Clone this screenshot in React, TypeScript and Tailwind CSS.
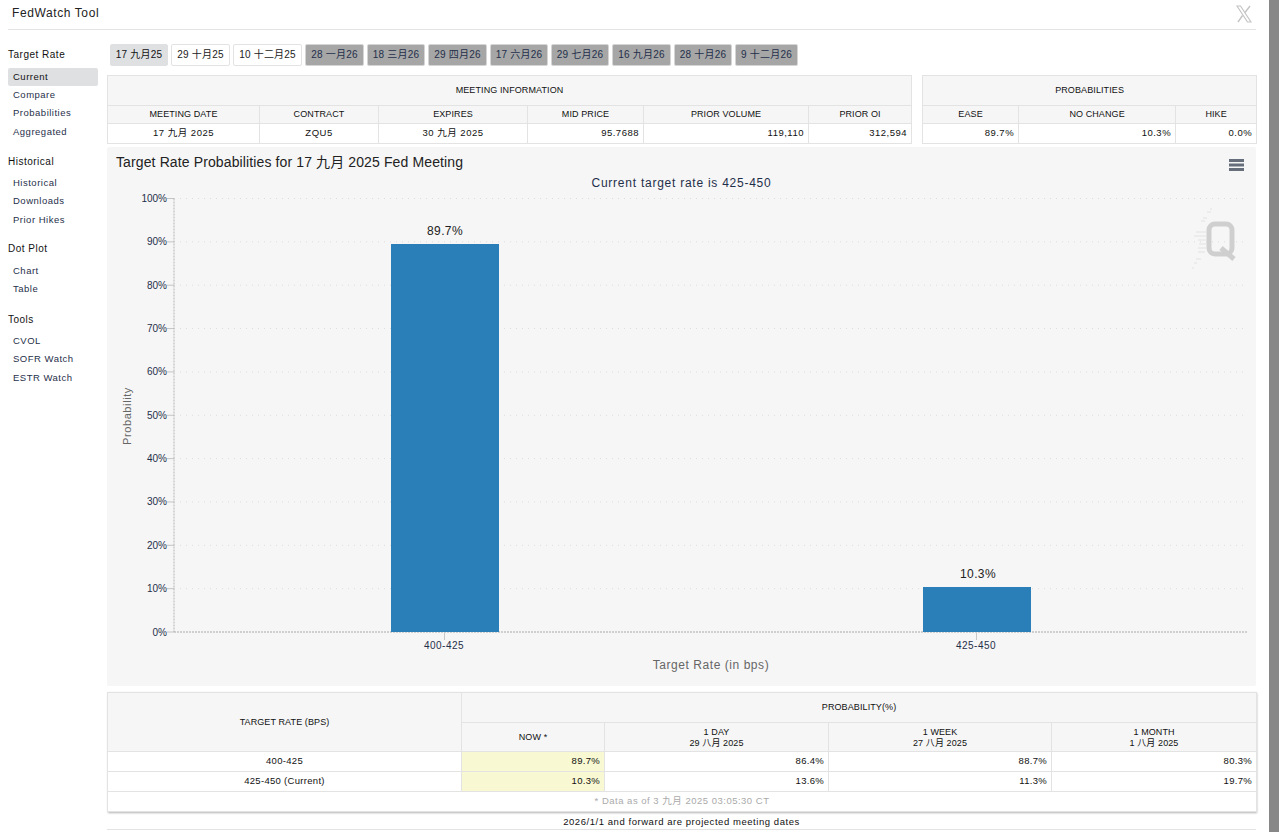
import React from 'react';

const font = 'font-["Liberation_Sans","Noto_Sans_CJK_SC",sans-serif]';

const tabs = [
  { label: '17 九月25', w: 'w-[58px]', kind: 'active' },
  { label: '29 十月25', w: 'w-[59px]', kind: 'open' },
  { label: '10 十二月25', w: 'w-[69px]', kind: 'open' },
  { label: '28 一月26', w: 'w-[59px]', kind: 'future' },
  { label: '18 三月26', w: 'w-[58px]', kind: 'future' },
  { label: '29 四月26', w: 'w-[59px]', kind: 'future' },
  { label: '17 六月26', w: 'w-[58px]', kind: 'future' },
  { label: '29 七月26', w: 'w-[58px]', kind: 'future' },
  { label: '16 九月26', w: 'w-[59px]', kind: 'future' },
  { label: '28 十月26', w: 'w-[58px]', kind: 'future' },
  { label: '9 十二月26', w: 'w-[63px]', kind: 'future' },
];

const nav = [
  { title: 'Target Rate', items: ['Current', 'Compare', 'Probabilities', 'Aggregated'], gap: 'mb-[13.5px]' },
  { title: 'Historical', items: ['Historical', 'Downloads', 'Prior Hikes'], gap: 'mb-[13px]' },
  { title: 'Dot Plot', items: ['Chart', 'Table'], gap: 'mb-[14px]' },
  { title: 'Tools', items: ['CVOL', 'SOFR Watch', 'ESTR Watch'], gap: '' },
];

const th = 'border border-[#e3e3e3] bg-[#f6f6f6] font-normal text-center text-[#111] p-0 pt-[1px] text-[9px] tracking-[0.1px]';
const td = 'border border-[#e3e3e3] bg-white text-[#111] p-0 px-[4px]';

function Sidebar() {
  return (
    <aside className="w-[90px] shrink-0 pt-[18px] text-[9.5px] tracking-[0.5px]">
      {nav.map((group) => (
        <div key={group.title} className={group.gap}>
          <div className="h-[14px] leading-[14px] text-[#111] text-[10px]">{group.title}</div>
          <div className="mt-[5.5px]">
            {group.items.map((item) => (
              <div
                key={item}
                className={`h-[18.4px] leading-[18px] pl-[5px] text-[#1f2f4a] rounded-[2px] ${item === 'Current' ? 'bg-[#dfe0e2] text-[#111]' : ''}`}
              >
                {item}
              </div>
            ))}
          </div>
        </div>
      ))}
    </aside>
  );
}

function Tabs() {
  return (
    <div className="flex gap-[3px] pl-[3px] h-[23px]">
      {tabs.map((tab) => (
        <div
          key={tab.label}
          className={`${tab.w} h-[22px] leading-[20px] text-center text-[10px] tracking-[0.2px] rounded-[2px] border whitespace-nowrap ${
            tab.kind === 'active'
              ? 'bg-[#dfe0e2] border-[#dfe0e2] text-[#111]'
              : tab.kind === 'open'
                ? 'bg-white border-[#e3e3e3] text-[#222]'
                : 'bg-[#a6a6a6] border-[#d5d5d5] text-[#1f2f4a]'
          }`}
        >
          {tab.label}
        </div>
      ))}
    </div>
  );
}

function MeetingTables() {
  return (
    <div className="flex gap-[10px] mt-[8px] text-[9.5px] tracking-[0.5px]">
      <table className="table-fixed border-collapse w-[804px] h-[68px]">
        <colgroup>
          <col className="w-[152px]" />
          <col className="w-[119px]" />
          <col className="w-[149px]" />
          <col className="w-[116px]" />
          <col className="w-[165px]" />
          <col className="w-[103px]" />
        </colgroup>
        <thead>
          <tr className="h-[30px]">
            <th colSpan={6} className={th}>MEETING INFORMATION</th>
          </tr>
          <tr className="h-[18px]">
            {['MEETING DATE', 'CONTRACT', 'EXPIRES', 'MID PRICE', 'PRIOR VOLUME', 'PRIOR OI'].map((h) => (
              <th key={h} className={th}>{h}</th>
            ))}
          </tr>
        </thead>
        <tbody>
          <tr className="h-[20px]">
            <td className={`${td} text-center`}>17 九月 2025</td>
            <td className={`${td} text-center`}>ZQU5</td>
            <td className={`${td} text-center`}>30 九月 2025</td>
            <td className={`${td} text-right`}>95.7688</td>
            <td className={`${td} text-right`}>119,110</td>
            <td className={`${td} text-right`}>312,594</td>
          </tr>
        </tbody>
      </table>
      <table className="table-fixed border-collapse w-[334px] h-[68px]">
        <colgroup>
          <col className="w-[96px]" />
          <col className="w-[157px]" />
          <col className="w-[81px]" />
        </colgroup>
        <thead>
          <tr className="h-[30px]">
            <th colSpan={3} className={th}>PROBABILITIES</th>
          </tr>
          <tr className="h-[18px]">
            {['EASE', 'NO CHANGE', 'HIKE'].map((h) => (
              <th key={h} className={th}>{h}</th>
            ))}
          </tr>
        </thead>
        <tbody>
          <tr className="h-[20px]">
            <td className={`${td} text-right`}>89.7%</td>
            <td className={`${td} text-right`}>10.3%</td>
            <td className={`${td} text-right`}>0.0%</td>
          </tr>
        </tbody>
      </table>
    </div>
  );
}

// chart coordinates are relative to the panel's svg (panel origin 107,147)
function Chart() {
  const top = 51.5;
  const bottom = 485;
  const axisX = 67;
  const right = 1141;
  const ticks = [100, 90, 80, 70, 60, 50, 40, 30, 20, 10, 0];
  const yOf = (v: number) => bottom - ((bottom - top) * v) / 100;

  return (
    <svg viewBox="0 0 1149 539" className="absolute inset-0 w-[1149px] h-[539px]">
      {ticks.map((t) => (
        <g key={t}>
          {t > 0 && (
            <line x1={axisX} x2={right} y1={yOf(t)} y2={yOf(t)} stroke="#dcdcdc" strokeWidth="1" strokeDasharray="1 5" />
          )}
          <line x1={axisX - 7} x2={axisX} y1={yOf(t)} y2={yOf(t)} stroke="#c4c4c4" strokeWidth="1" />
          <text x={axisX - 7} y={yOf(t) + 3.5} textAnchor="end" fontSize="10" fill="#1f2f4a">{t}%</text>
        </g>
      ))}
      <line x1={axisX} x2={axisX} y1={top} y2={bottom} stroke="#b4b4b4" strokeWidth="1" strokeDasharray="2 1" />
      <line x1={axisX} x2={right} y1={bottom} y2={bottom} stroke="#a8a8a8" strokeWidth="1" strokeDasharray="2 1" />
      <line x1="337.5" x2="337.5" y1={bottom} y2={bottom + 8} stroke="#c8c8c8" />
      <line x1="869.5" x2="869.5" y1={bottom} y2={bottom + 8} stroke="#c8c8c8" />

      <rect x="284" y="97" width="108" height="388" fill="#2a7fb8" />
      <rect x="816" y="440" width="108" height="45" fill="#2a7fb8" />

      <text x="338" y="88" textAnchor="middle" fontSize="12" letterSpacing="0.4" fill="#222">89.7%</text>
      <text x="871" y="431" textAnchor="middle" fontSize="12" letterSpacing="0.4" fill="#222">10.3%</text>

      <text x="337" y="502" textAnchor="middle" fontSize="10" letterSpacing="0.5" fill="#1f2f4a">400-425</text>
      <text x="869" y="502" textAnchor="middle" fontSize="10" letterSpacing="0.5" fill="#1f2f4a">425-450</text>
      <text x="604" y="522" textAnchor="middle" fontSize="12" letterSpacing="0.55" fill="#666">Target Rate (in bps)</text>
      <text transform="translate(24 269) rotate(-90)" textAnchor="middle" fontSize="11" letterSpacing="0.6" fill="#666">Probability</text>

      {/* Q watermark */}
      <g fill="none" stroke="#cfcfcf">
        <rect x="1102" y="77" width="23" height="30" rx="6" strokeWidth="5" />
        <line x1="1114" y1="101" x2="1127" y2="112" strokeWidth="5" />
      </g>
      <g stroke="#e2e2e2" strokeWidth="1">
        <line x1="1103" y1="62" x2="1105" y2="62" />
        <line x1="1100" y1="65" x2="1104" y2="65" />
        <line x1="1096" y1="71" x2="1100" y2="71" />
        <line x1="1094" y1="74" x2="1098" y2="74" />
        <line x1="1089" y1="85" x2="1099" y2="85" />
        <line x1="1087" y1="89" x2="1099" y2="89" />
        <line x1="1091" y1="93" x2="1099" y2="93" />
        <line x1="1092" y1="97" x2="1099" y2="97" />
        <line x1="1091" y1="101" x2="1099" y2="101" />
        <line x1="1091" y1="105" x2="1098" y2="105" />
        <line x1="1089" y1="112" x2="1094" y2="112" />
        <line x1="1087" y1="116" x2="1090" y2="116" />
        <line x1="1085" y1="121" x2="1087" y2="121" />
      </g>

      {/* export menu */}
      <g stroke="#666e7c" strokeWidth="3">
        <line x1="1122" y1="13.5" x2="1137" y2="13.5" />
        <line x1="1122" y1="18" x2="1137" y2="18" />
        <line x1="1122" y1="22.5" x2="1137" y2="22.5" />
      </g>
    </svg>
  );
}

function ChartPanel() {
  return (
    <section className="relative mt-[3px] h-[539px] w-[1149px] bg-[#f6f6f6] rounded-[2px]">
      <Chart />
      <h2 className="relative pl-[9px] pt-[7px] h-[22px] leading-[16px] text-[14px] tracking-[0.12px] font-normal text-[#222]">
        Target Rate Probabilities for 17 九月 2025 Fed Meeting
      </h2>
      <p className="relative mt-[6px] text-center text-[12px] leading-[16px] tracking-[0.75px] text-[#1f2f4a]">
        Current target rate is 425-450
      </p>
    </section>
  );
}

function ProbabilityTable() {
  const rows = [
    ['400-425', '89.7%', '86.4%', '88.7%', '80.3%'],
    ['425-450 (Current)', '10.3%', '13.6%', '11.3%', '19.7%'],
  ];
  return (
    <div className="mt-[6px] w-[1149px] shadow-[1px_1px_2px_rgba(0,0,0,0.3)] text-[9.5px] tracking-[0.3px]">
      <table className="table-fixed border-collapse w-full h-[119px]">
        <colgroup>
          <col className="w-[354px]" />
          <col className="w-[143px]" />
          <col className="w-[224px]" />
          <col className="w-[223px]" />
          <col className="w-[205px]" />
        </colgroup>
        <thead>
          <tr className="h-[30px]">
            <th rowSpan={2} className={th}>TARGET RATE (BPS)</th>
            <th colSpan={4} className={th}>PROBABILITY(%)</th>
          </tr>
          <tr className="h-[29px] leading-[11px]">
            <th className={th}>NOW *</th>
            <th className={th}>1 DAY<br />29 八月 2025</th>
            <th className={th}>1 WEEK<br />27 八月 2025</th>
            <th className={th}>1 MONTH<br />1 八月 2025</th>
          </tr>
        </thead>
        <tbody>
          {rows.map((row) => (
            <tr key={row[0]} className="h-[20px]">
              <td className={`${td} text-center`}>{row[0]}</td>
              <td className={`${td} text-right !bg-[#f8f8d2]`}>{row[1]}</td>
              <td className={`${td} text-right`}>{row[2]}</td>
              <td className={`${td} text-right`}>{row[3]}</td>
              <td className={`${td} text-right`}>{row[4]}</td>
            </tr>
          ))}
          <tr className="h-[20px]">
            <td colSpan={5} className={`${td} text-center !text-[#aaa] tracking-[0.5px]`}>* Data as of 3 九月 2025 03:05:30 CT</td>
          </tr>
        </tbody>
      </table>
    </div>
  );
}

export default function App() {
  return (
    <div className={`${font} flex w-[1279px] h-[832px] overflow-hidden bg-white`}>
      <div className="w-[1269px] shrink-0 pl-[8px] pr-[13px]">
        <header className="flex items-start justify-between h-[30px] border-b border-[#e3e3e3] pt-[5px] pl-[4px] pr-[4px]">
          <span className="text-[12px] leading-[16px] tracking-[0.6px] text-[#222]">FedWatch Tool</span>
          <svg viewBox="0 0 16 18" className="w-[16px] h-[18px]" fill="none" stroke="#c4c4c4">
            <path d="M1 1h3.5l10.5 16h-3.5z" strokeWidth="1.2" />
            <path d="M14 1L9 7.5M6.5 10.5L2 17" strokeWidth="1.4" />
          </svg>
        </header>
        <div className="flex">
          <Sidebar />
          <main className="w-[1149px] pt-[14px] ml-[9px]">
            <Tabs />
            <MeetingTables />
            <ChartPanel />
            <ProbabilityTable />
            <p className="mt-[4px] h-[14px] w-[1149px] leading-[12px] text-center text-[9.5px] tracking-[0.55px] text-[#111] border-b border-[#e3e3e3]">
              2026/1/1 and forward are projected meeting dates
            </p>
          </main>
        </div>
      </div>
      <div className="w-[10px] h-full bg-[#878787]" />
    </div>
  );
}
